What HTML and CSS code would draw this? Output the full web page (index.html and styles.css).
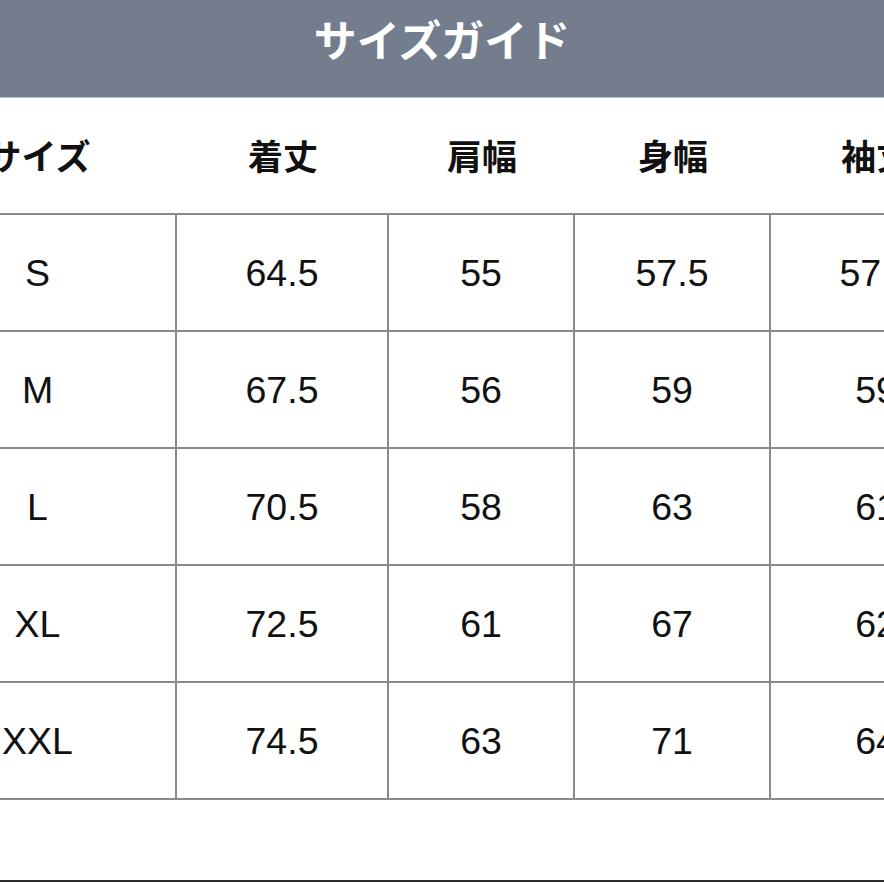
FILE: index.html
```html
<!DOCTYPE html>
<html lang="ja">
<head>
<meta charset="utf-8">
<link rel="stylesheet" href="styles.css">
</head>
<body>
<div class="page">
  <header class="titlebar"><h1 class="title">サイズガイド</h1></header>
  <div class="table">
    <div class="row head">
      <div class="cell c1">サイズ</div>
      <div class="cell c2">着丈</div>
      <div class="cell c3">肩幅</div>
      <div class="cell c4">身幅</div>
      <div class="cell c5">袖丈</div>
    </div>
    <div class="row">
      <div class="cell c1">S</div>
      <div class="cell c2">64.5</div>
      <div class="cell c3">55</div>
      <div class="cell c4">57.5</div>
      <div class="cell c5">57.5</div>
    </div>
    <div class="row">
      <div class="cell c1">M</div>
      <div class="cell c2">67.5</div>
      <div class="cell c3">56</div>
      <div class="cell c4">59</div>
      <div class="cell c5">59</div>
    </div>
    <div class="row">
      <div class="cell c1">L</div>
      <div class="cell c2">70.5</div>
      <div class="cell c3">58</div>
      <div class="cell c4">63</div>
      <div class="cell c5">61</div>
    </div>
    <div class="row">
      <div class="cell c1">XL</div>
      <div class="cell c2">72.5</div>
      <div class="cell c3">61</div>
      <div class="cell c4">67</div>
      <div class="cell c5">62</div>
    </div>
    <div class="row">
      <div class="cell c1">XXL</div>
      <div class="cell c2">74.5</div>
      <div class="cell c3">63</div>
      <div class="cell c4">71</div>
      <div class="cell c5">64</div>
    </div>
  </div>
  <div class="footer"></div>
</div>
</body>
</html>
```
FILE: styles.css
```css
html, body {
  margin: 0;
  padding: 0;
  background: #ffffff;
  overflow: hidden;
}
.page {
  width: 884px;
  height: 884px;
  overflow: hidden;
  position: relative;
  font-family: "Liberation Sans", "Noto Sans CJK JP", sans-serif;
  color: #111111;
}
.titlebar {
  height: 97px;
  background: #737d8d;
  border-bottom: 1px solid #b9bfca;
  display: flex;
  align-items: center;
  justify-content: center;
}
.title {
  margin: 0 0 21px 0;
  font-family: "Noto Sans CJK JP", sans-serif;
  font-weight: 700;
  font-size: 43px;
  line-height: 1;
  color: #ffffff;
  letter-spacing: 0;
}
.table {
  margin-left: -100px;
  width: 1100px;
}
.row {
  display: flex;
  height: 117px;
  box-sizing: border-box;
  border-bottom: 2px solid #8a8a8a;
}
.cell {
  box-sizing: border-box;
  display: flex;
  align-items: center;
  justify-content: center;
  font-size: 37.5px;
  border-right: 2px solid #8a8a8a;
  padding-top: 2px;
}
.head .cell {
  border-right: none;
  font-family: "Noto Sans CJK JP", sans-serif;
  font-weight: 700;
  font-size: 35px;
  padding-bottom: 2px;
  padding-top: 0;
}
.c1 { width: 277px; }
.c2 { width: 212px; }
.c3 { width: 186px; }
.c4 { width: 196px; }
.c5 { width: 210px; border-right: none; }
.footer {
  margin-top: 80px;
  border-top: 2px solid #2a2a2a;
}
```
